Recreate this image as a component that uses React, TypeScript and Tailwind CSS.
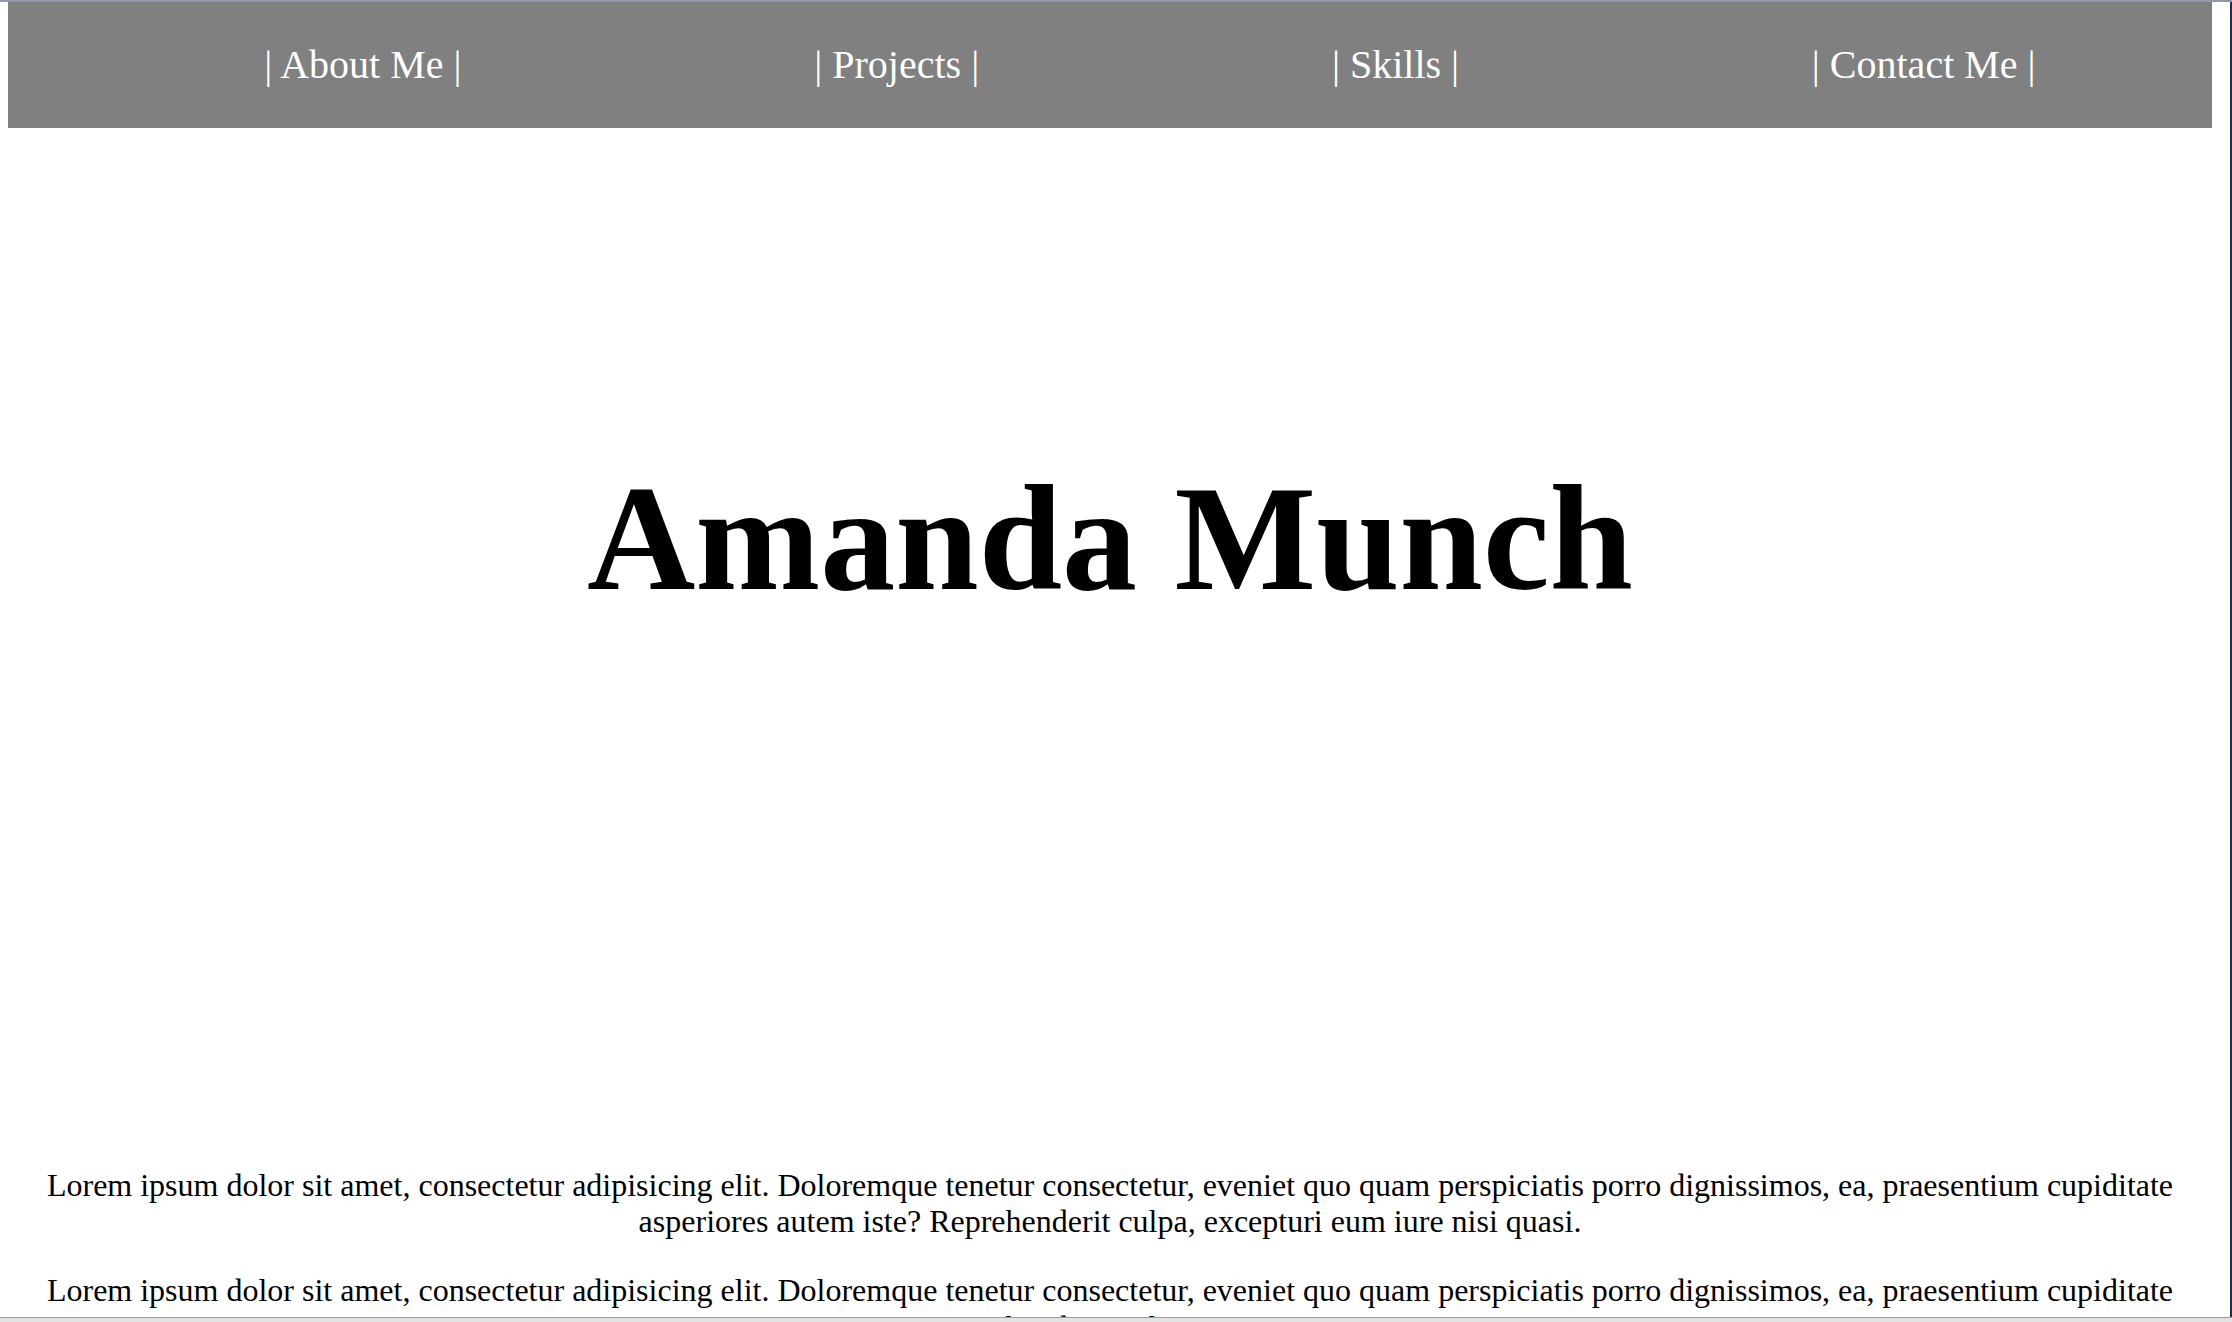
const links = ['About Me', 'Projects', 'Skills', 'Contact Me']

const lorem =
  'Lorem ipsum dolor sit amet, consectetur adipisicing elit. Doloremque tenetur consectetur, eveniet quo quam perspiciatis porro dignissimos, ea, praesentium cupiditate asperiores autem iste? Reprehenderit culpa, excepturi eum iure nisi quasi.'

export default function App() {
  return (
    <div className="w-[2232px] h-[1322px] flex flex-col overflow-hidden bg-white font-['Liberation_Serif','Times_New_Roman',serif]">
      {/* window chrome top */}
      <div className="h-[2px] bg-[#9298aa]" />

      <div className="flex flex-1 min-h-0">
        <div className="flex-1 overflow-hidden bg-white">
          <div className="pl-[8px] pr-[18px]">
            <nav className="h-[126px] bg-[#808080] flex items-center justify-around pl-[80px]">
              {links.map((l) => (
                <a key={l} className="text-white text-[40px] leading-[1.15]">
                  | {l} |
                </a>
              ))}
            </nav>

            <h1 className="mt-[324px] text-center text-black font-bold text-[150px] leading-[1.15]">
              Amanda Munch
            </h1>

            <div className="mt-[542px] text-center text-black text-[32px] leading-[1.15]">
              <p>{lorem}</p>
              <p className="mt-[32px]">{lorem}</p>
            </div>
          </div>
        </div>
        {/* window chrome right */}
        <div className="w-[2px] bg-[#1f2d4f]" />
      </div>

      {/* window chrome bottom */}
      <div className="h-[1px] bg-[#8f9bc0]" />
      <div className="h-[4px] bg-[#e3e3e3]" />
    </div>
  )
}
